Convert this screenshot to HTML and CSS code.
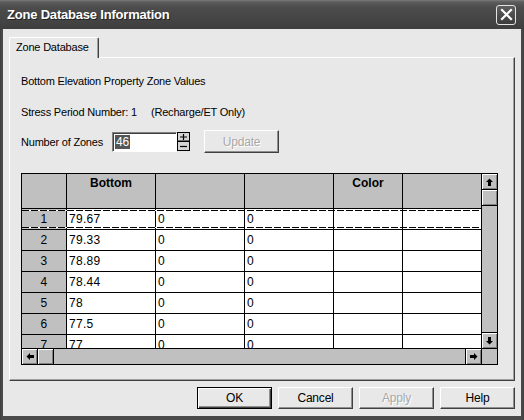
FILE: index.html
```html
<!DOCTYPE html>
<html>
<head>
<meta charset="utf-8">
<title>Zone Database Information</title>
<link rel="stylesheet" href="styles.css">
</head>
<body>
<div class="window">
  <div class="titlebar">
    <span class="title">Zone Database Information</span>
    <div class="close">
      <svg width="13" height="13" viewBox="0 0 13 13"><path d="M2 2 L11 11 M11 2 L2 11" stroke="#fff" stroke-width="2.2" stroke-linecap="square"/></svg>
    </div>
  </div>
  <div class="frame">
    <div class="client">
      <div class="tabs"><div class="tab">Zone Database</div></div>
      <div class="panel">
        <div class="line">Bottom Elevation Property Zone Values</div>
        <div class="line l2"><span class="sp">Stress Period Number: 1</span><span>(Recharge/ET Only)</span></div>
        <div class="zones">
          <span class="zlabel">Number of Zones</span>
          <div class="field"><span class="selt">46</span></div>
          <svg class="spin" width="13" height="19" viewBox="0 0 13 19">
            <rect x="0.5" y="0.5" width="12" height="8.5" fill="#d4d4d4" stroke="#000"/>
            <rect x="0.5" y="9.5" width="12" height="9" fill="#d4d4d4" stroke="#000"/>
            <path d="M3 5 H10 M6.5 2 V8" stroke="#000" stroke-width="1.2" fill="none"/>
            <path d="M3 14.5 H10" stroke="#000" stroke-width="1.2" fill="none"/>
          </svg>
          <div class="btn disabled update">Update</div>
        </div>
        <div class="grid">
          <div class="viewport">
            <div class="row hdr">
              <div class="c c0"></div>
              <div class="c c1">Bottom</div>
              <div class="c c2"></div>
              <div class="c c3"></div>
              <div class="c c4">Color</div>
              <div class="c c5"></div>
            </div>
            <div class="row sel">
              <div class="c c0">1</div><div class="c c1">79.67</div><div class="c c2">0</div><div class="c c3">0</div><div class="c c4"></div><div class="c c5"></div>
            </div>
            <div class="row">
              <div class="c c0">2</div><div class="c c1">79.33</div><div class="c c2">0</div><div class="c c3">0</div><div class="c c4"></div><div class="c c5"></div>
            </div>
            <div class="row">
              <div class="c c0">3</div><div class="c c1">78.89</div><div class="c c2">0</div><div class="c c3">0</div><div class="c c4"></div><div class="c c5"></div>
            </div>
            <div class="row">
              <div class="c c0">4</div><div class="c c1">78.44</div><div class="c c2">0</div><div class="c c3">0</div><div class="c c4"></div><div class="c c5"></div>
            </div>
            <div class="row">
              <div class="c c0">5</div><div class="c c1">78</div><div class="c c2">0</div><div class="c c3">0</div><div class="c c4"></div><div class="c c5"></div>
            </div>
            <div class="row">
              <div class="c c0">6</div><div class="c c1">77.5</div><div class="c c2">0</div><div class="c c3">0</div><div class="c c4"></div><div class="c c5"></div>
            </div>
            <div class="row">
              <div class="c c0">7</div><div class="c c1">77</div><div class="c c2">0</div><div class="c c3">0</div><div class="c c4"></div><div class="c c5"></div>
            </div>
          </div>
          <div class="vscroll">
            <div class="sbtn"><svg width="7" height="8" viewBox="0 0 7 8"><path d="M3.5 0.5 L7 4 H5 V8 H2 V4 H0 Z" fill="#000"/></svg></div>
            <div class="sbtn thumb"></div>
            <div class="sbtn down"><svg width="7" height="8" viewBox="0 0 7 8"><path d="M3.5 7.5 L7 4 H5 V0 H2 V4 H0 Z" fill="#000"/></svg></div>
          </div>
          <div class="hscroll">
            <div class="hbtn"><svg width="8" height="7" viewBox="0 0 8 7"><path d="M0.5 3.5 L4 0 V2 H8 V5 H4 V7 Z" fill="#000"/></svg></div>
            <div class="hbtn thumb"></div>
            <div class="hbtn right"><svg width="8" height="7" viewBox="0 0 8 7"><path d="M7.5 3.5 L4 0 V2 H0 V5 H4 V7 Z" fill="#000"/></svg></div>
          </div>
          <div class="corner"></div>
        </div>
      </div>
      <div class="buttons">
        <div class="btn default">OK</div>
        <div class="btn">Cancel</div>
        <div class="btn disabled">Apply</div>
        <div class="btn">Help</div>
      </div>
    </div>
  </div>
</div>
</body>
</html>
```

FILE: styles.css
```css
* { box-sizing: border-box; }
html, body { margin: 0; padding: 0; }
body {
  width: 524px;
  height: 420px;
  overflow: hidden;
  background: #404040;
  font-family: "Liberation Sans", Arial, sans-serif;
  font-size: 11px;
  letter-spacing: -0.2px;
  color: #000;
}
.window {
  width: 524px;
  height: 420px;
  display: flex;
  flex-direction: column;
}
.titlebar {
  height: 29px;
  flex: none;
  display: flex;
  align-items: center;
  padding-left: 7px;
  background: linear-gradient(#7a7a7a 0, #5c5c5c 2px, #4c4c4c 7px, #464646 60%, #3e3e3e 100%);
}
.title {
  color: #fff;
  font-weight: bold;
  font-size: 13px;
  letter-spacing: -0.2px;
  text-shadow: 1px 1px 0 #222;
}
.close {
  margin-left: auto;
  margin-right: 8px;
  width: 20px;
  height: 20px;
  border: 1px solid #e4e4e4;
  border-radius: 3px;
  background: linear-gradient(#5e5e5e, #3c3c3c);
  display: flex;
  align-items: center;
  justify-content: center;
}
.frame {
  flex: 1;
  display: flex;
  padding: 0 3px 4px 3px;
  background: linear-gradient(90deg, #3e3e3e, #4a4a4a 2px, #4a4a4a calc(100% - 2px), #3e3e3e);
}
.client {
  flex: 1;
  background: #e8e8e8;
  padding: 8px 6px 7px 6px;
  display: flex;
  flex-direction: column;
}
.tabs {
  height: 20px;
  display: flex;
}
.tab {
  position: relative;
  z-index: 1;
  width: 90px;
  height: 21px;
  background: #e8e8e8;
  border-top: 1px solid #fff;
  border-left: 1px solid #fff;
  border-right: 1px solid #404040;
  border-top-left-radius: 2px;
  border-top-right-radius: 2px;
  box-shadow: inset -1px 0 #a0a0a0;
  padding: 2px 0 0 6px;
  line-height: 15px;
}
.panel {
  height: 324px;
  border-top: 1px solid #fff;
  border-left: 1px solid #fff;
  border-right: 1px solid #404040;
  border-bottom: 1px solid #404040;
  box-shadow: inset -1px -1px #a0a0a0;
  padding: 16px 11px 0 11px;
}
.line {
  line-height: 14px;
  height: 14px;
  white-space: nowrap;
}
.l2 { margin-top: 17px; display: flex; }
.sp { width: 130px; }
.zones {
  margin-top: 11px;
  height: 23px;
  display: flex;
  align-items: center;
}
.zlabel { width: 91px; }
.field {
  width: 65px;
  height: 20px;
  background: #fff;
  border-top: 1px solid #808080;
  border-left: 1px solid #808080;
  border-bottom: 1px solid #fff;
  border-right: 1px solid #fff;
  box-shadow: inset 1px 1px #404040;
  padding: 2px 0 0 2px;
  display: flex;
  align-items: flex-start;
}
.selt {
  background: #555;
  color: #fff;
  font-size: 12px;
  line-height: 14px;
  padding: 0 1px;
}
.spin { margin-left: 0; display: block; }
.btn {
  width: 75px;
  height: 22px;
  flex: none;
  display: flex;
  align-items: center;
  justify-content: center;
  background: #e8e8e8;
  border-top: 1px solid #fff;
  border-left: 1px solid #fff;
  border-right: 1px solid #404040;
  border-bottom: 1px solid #404040;
  box-shadow: inset -1px -1px #909090;
  font-size: 12px;
}
.btn.default {
  border: 1px solid #000;
  box-shadow: inset 1px 1px #fff, inset -1px -1px #404040, inset -2px -2px #909090;
}
.btn.disabled {
  color: #a8a8a8;
  text-shadow: 1px 1px 0 #fff;
}
.update {
  margin-left: 14px;
  height: 23px;
}
.grid {
  margin-top: 20px;
  width: 477px;
  display: grid;
  grid-template-columns: 459px 15px;
  grid-template-rows: 174px 15px;
  gap: 1px;
  background: #000;
  border: 1px solid #000;
}
.viewport {
  background: #fff;
  overflow: hidden;
}
.row {
  display: flex;
  height: 21px;
  border-bottom: 1px solid #000;
  font-size: 12px;
  letter-spacing: 0.3px;
  line-height: 20px;
}
.row.hdr {
  height: 35px;
  font-weight: bold;
  letter-spacing: 0;
  line-height: 16px;
}
.c {
  flex: none;
  height: 100%;
  border-right: 1px solid #000;
  padding-left: 2px;
  white-space: nowrap;
}
.c0 { width: 45px; background: #c0c0c0; text-align: center; padding-left: 0; }
.c1, .c2, .c3 { width: 89px; }
.c4 { width: 69px; }
.c5 { width: 78px; border-right: none; }
.hdr .c { background: #c0c0c0; text-align: center; padding: 1px 0 0 0; }
.sel { position: relative; }
.sel::before, .sel::after {
  content: "";
  position: absolute;
  left: 0;
  right: 0;
  height: 1px;
  background: repeating-linear-gradient(90deg, #000 0 7px, #fff 7px 9px);
}
.sel::before { top: 1px; }
.sel::after { bottom: 1px; }
.vscroll {
  background: #c0c0c0;
  display: flex;
  flex-direction: column;
}
.sbtn {
  height: 16px;
  flex: none;
  border-bottom: 1px solid #000;
  background: #c0c0c0;
  box-shadow: inset 1px 1px #fff, inset -1px -1px #808080;
  display: flex;
  align-items: center;
  justify-content: center;
}
.sbtn.down {
  margin-top: auto;
  border-bottom: none;
  border-top: 1px solid #000;
}
.hscroll {
  background: #c0c0c0;
  display: flex;
}
.hbtn {
  width: 16px;
  flex: none;
  border-right: 1px solid #000;
  background: #c0c0c0;
  box-shadow: inset 1px 1px #fff, inset -1px -1px #808080;
  display: flex;
  align-items: center;
  justify-content: center;
}
.hbtn.right {
  margin-left: auto;
  border-right: none;
  border-left: 1px solid #000;
}
.corner { background: #c0c0c0; }
.buttons {
  margin-top: 6px;
  display: flex;
  justify-content: flex-end;
  gap: 6px;
}
```
